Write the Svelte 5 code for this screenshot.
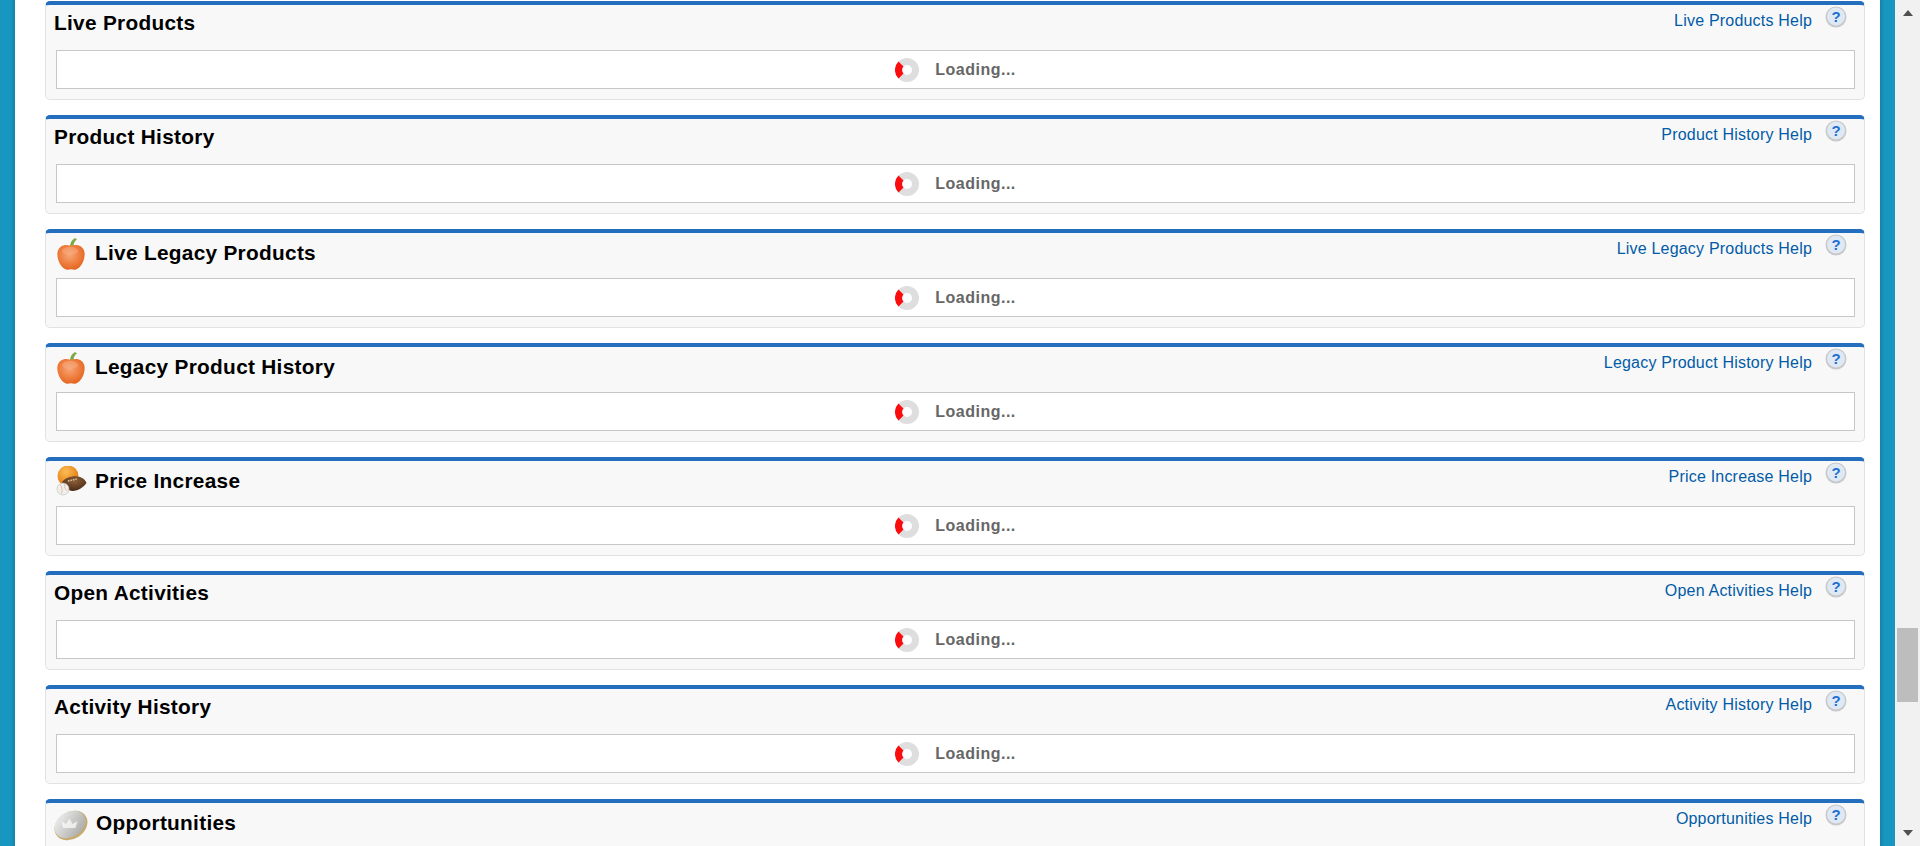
<script>
  const panels = [
    { title: 'Live Products', head: 'plain', loading: true },
    { title: 'Product History', head: 'plain', loading: true },
    { title: 'Live Legacy Products', icon: 'apple', head: 'iconed', loading: true },
    { title: 'Legacy Product History', icon: 'apple', head: 'iconed', loading: true },
    { title: 'Price Increase', icon: 'balls', head: 'iconed', loading: true },
    { title: 'Open Activities', head: 'plain', loading: true },
    { title: 'Activity History', head: 'plain', loading: true },
    { title: 'Opportunities', icon: 'coin', head: 'iconed', loading: false }
  ];
</script>

<div class="page">
  <div class="band band-left"></div>
  <main class="content">
    {#each panels as p, i}
      <section class="panel">
        <div class="head {p.head}">
          {#if p.icon === 'apple'}
            <svg class="icon" viewBox="0 0 32 32">
              <defs>
                <radialGradient id="ap{i}" cx="0.45" cy="0.4" r="0.7">
                  <stop offset="0" stop-color="#f7a678" /><stop offset="0.55" stop-color="#ee7c3c" /><stop offset="1" stop-color="#df5d18" />
                </radialGradient>
              </defs>
              <path d="M15 9c0-4 1.5-7 5-9l2 1.500c-2.500 1.500-3.500 4-3.500 7.500z" fill="#7fa848" />
              <path d="M16 8c3.500-1.300 7.500-1.300 10.500 1 3.500 2.700 3.700 7.500 2.500 12-1.200 4.500-4.500 10-9 10.700-1.500.2-2.800-.5-4-.5s-2.500.7-4 .5c-4.500-.7-7.800-6.200-9-10.700C1.800 16.500 2 11.700 5.500 9c3-2.300 7-2.300 10.500-1z" fill="url(#ap{i})" />
              <ellipse cx="15" cy="13" rx="8" ry="4" fill="#f9b48c" opacity="0.45" />
            </svg>
          {:else if p.icon === 'balls'}
            <svg class="icon" viewBox="0 0 32 32">
              <defs>
                <radialGradient id="bb" cx="0.4" cy="0.3" r="0.7">
                  <stop offset="0" stop-color="#fbbd55" /><stop offset="1" stop-color="#e2780f" />
                </radialGradient>
                <radialGradient id="fb" cx="0.5" cy="0.3" r="0.8">
                  <stop offset="0" stop-color="#8f6038" /><stop offset="1" stop-color="#3d2210" />
                </radialGradient>
              </defs>
              <circle cx="13" cy="10" r="10.5" fill="url(#bb)" />
              <path d="M7 16c4-5 12-7 18-5 3 1 5.500 3 6.500 6-3 4-8 8-14 8-4 0-8.500-4-10.500-9z" fill="url(#fb)" />
              <path d="M13 15l9-2" stroke="#d8c6a8" stroke-width="1.5" stroke-dasharray="1.5 1" fill="none" />
              <circle cx="8" cy="23" r="6" fill="#f1efea" stroke="#bbb" stroke-width="0.6" />
              <path d="M5 18.500c2 2 2.500 5.500 1.500 9M10 18c-1 3 0 5 2.500 7" stroke="#d99a92" stroke-width="0.6" fill="none" />
            </svg>
          {:else if p.icon === 'coin'}
            <svg class="icon coin" viewBox="0 0 36 32">
              <defs>
                <linearGradient id="cn" x1="0.2" y1="0" x2="0.8" y2="1">
                  <stop offset="0" stop-color="#ededed" /><stop offset="1" stop-color="#a9a9a6" />
                </linearGradient>
              </defs>
              <ellipse cx="18" cy="16.5" rx="17.500" ry="13.500" transform="rotate(-32 18 16.5)" fill="#c7ab6e" />
              <ellipse cx="17" cy="15.5" rx="16.500" ry="12.500" transform="rotate(-32 17 15.5)" fill="url(#cn)" />
              <path d="M10 19l-1.500-7 4.500 3 3.500-5.500 3 5.500 5-3-2 7z" fill="#f6f6f6" opacity="0.8" />
            </svg>
          {/if}
          <h3>{p.title}</h3>
          <div class="help">
            <a href="#top">{p.title} Help</a>
            <svg class="q" viewBox="0 0 22 22">
              <circle cx="11" cy="11" r="10.5" fill="#c9c9c9" />
              <circle cx="11" cy="10.5" r="9" fill="#dfe9f6" />
              <text x="11" y="16" text-anchor="middle">?</text>
            </svg>
          </div>
        </div>
        {#if p.loading}
          <div class="box">
            <svg class="spin" viewBox="0 0 24 24">
              <circle cx="12" cy="12" r="8.5" fill="none" stroke="#dedede" stroke-width="7" />
              <path d="M3.500 3.500A12 12 0 0 0 3.500 20.500L8.500 15.500A5 5 0 0 1 8.500 8.500Z" fill="#fb0d0d" />
            </svg>
            <span class="load">Loading...</span>
          </div>
        {/if}
      </section>
    {/each}
  </main>
  <div class="band band-right"></div>
  <aside class="scrollbar">
    <span class="arrow up"></span>
    <div class="track"><div class="thumb"></div></div>
    <span class="arrow down"></span>
  </aside>
</div>

<style>
  :global(body) {
    margin: 0;
    overflow: hidden;
    background: #fff;
  }
  .page {
    display: grid;
    grid-template-columns: 15px 1fr 15px 25px;
    height: 846px;
    overflow: hidden;
    font-family: "Liberation Sans", Arial, sans-serif;
  }
  .band-left {
    background: linear-gradient(to right, #1797c0 0, #1797c0 70%, #1383a8 100%);
  }
  .band-right {
    background: linear-gradient(to left, #1797c0 0, #1797c0 70%, #1383a8 100%);
  }
  .content {
    padding: 1px 15px 0 30px;
    min-width: 0;
    overflow: hidden;
  }
  .panel {
    box-sizing: border-box;
    height: 99px;
    margin-bottom: 15px;
    padding: 0 9px 0 10px;
    background: #f8f8f8;
    border: 1px solid #e0e3e5;
    border-top: 4px solid #236fbd;
    border-radius: 5px;
    display: flex;
    flex-direction: column;
  }
  .head {
    height: 45px;
    flex: none;
    display: flex;
    align-items: center;
    position: relative;
  }
  .icon {
    width: 32px;
    height: 32px;
    margin: -4px 8px 0 -1px;
    flex: none;
  }
  .icon.coin {
    width: 36px;
    margin: -1px 7px 0 -3px;
  }
  h3 {
    font-size: 20.8px;
    line-height: 22px;
    font-weight: 700;
    letter-spacing: 0.3px;
    color: #000;
  }
  .plain h3 { margin: -10px 0 0 -2px; }
  .iconed h3 { margin: -6px 0 0 0; }
  .help {
    position: absolute;
    right: 8px;
    top: 7px;
    display: flex;
    align-items: center;
    gap: 13px;
  }
  .help a {
    font-size: 16px;
    letter-spacing: 0.2px;
    color: #015ba7;
    text-decoration: none;
  }
  .q {
    width: 22px;
    height: 22px;
    margin-top: -9px;
  }
  .q text {
    font: 700 15px "Liberation Sans", Arial, sans-serif;
    fill: #236fcf;
  }
  .box {
    box-sizing: border-box;
    height: 39px;
    background: #fff;
    border: 1px solid #c7c7c7;
    display: flex;
    align-items: center;
    justify-content: center;
    gap: 16px;
  }
  .spin {
    width: 24px;
    height: 24px;
    filter: blur(0.5px);
  }
  .load {
    font-size: 16px;
    font-weight: 700;
    letter-spacing: 0.5px;
    color: #666;
  }
  .scrollbar {
    background: #f1f1f1;
    display: flex;
    flex-direction: column;
    align-items: center;
  }
  .track {
    flex: 1;
    width: 100%;
    position: relative;
  }
  .thumb {
    position: absolute;
    left: 2px;
    right: 2px;
    top: 612px;
    height: 74px;
    background: #bdbdbd;
  }
  .arrow {
    width: 0;
    height: 0;
    border-left: 5.5px solid transparent;
    border-right: 5.5px solid transparent;
    flex: none;
  }
  .up {
    margin: 10px 0 0;
    border-bottom: 6px solid #505050;
  }
  .down {
    margin: 0 0 10px;
    border-top: 6px solid #505050;
  }
</style>
